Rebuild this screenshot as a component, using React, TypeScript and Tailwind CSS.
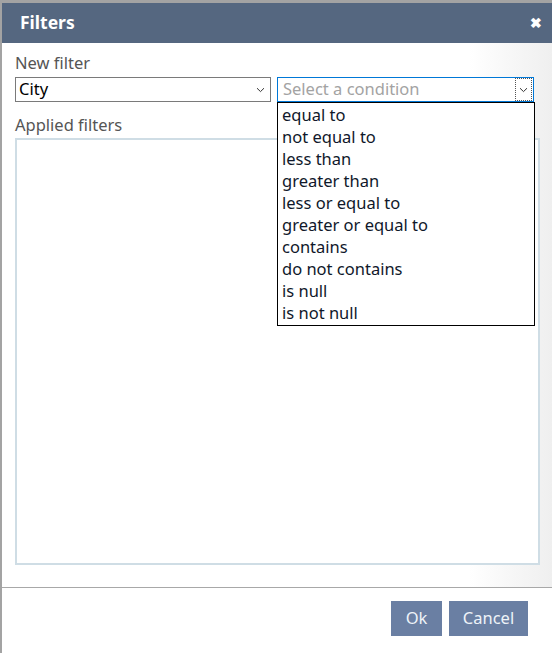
import React from "react";

const options = [
  "equal to",
  "not equal to",
  "less than",
  "greater than",
  "less or equal to",
  "greater or equal to",
  "contains",
  "do not contains",
  "is null",
  "is not null",
];

function Chevron() {
  return (
    <svg width="9" height="6" viewBox="0 0 9 6" fill="none">
      <path d="M1 1.2 L4.5 4.6 L8 1.2" stroke="#333" strokeWidth="1" />
    </svg>
  );
}

export default function App() {
  return (
    <div
      className="w-[552px] h-[653px] bg-[#a3a3a3] pt-[3px] pl-[2px] overflow-hidden"
      style={{ fontFamily: '"Noto Sans", "Open Sans", Arial, sans-serif' }}
    >
      <div className="relative flex flex-col w-[550px] h-[650px] bg-white">
        {/* header */}
        <div className="h-[40px] bg-[#556780] flex items-center justify-between pl-[18px] pr-[10px] shrink-0">
          <span className="text-white font-bold text-[17.5px] leading-none">Filters</span>
          <span className="text-white font-bold text-[14px] leading-none">✖</span>
        </div>
        {/* body */}
        <div className="flex-1 flex flex-col px-[13px] pt-[10px] bg-gradient-to-r from-white via-white via-85% to-[#efefef] border-b border-[#a8a8a8]">
          <div className="text-[16.5px] leading-[20px] text-[#555]">New filter</div>
          <div className="flex gap-[6px] mt-[4px]">
            <div className="w-[256px] h-[25px] border border-[#7a7a7a] bg-white flex items-center justify-between pl-[3px] pr-[5px]">
              <span className="text-[16.5px] text-black leading-none">City</span>
              <Chevron />
            </div>
            <div className="relative w-[257px] h-[25px] border border-[#0078d7] bg-white flex items-center justify-between pl-[5px]">
              <span className="text-[16.5px] text-[#a3a3a3] leading-none">Select a condition</span>
              <div className="w-[17px] h-[23px] border border-dotted border-[#555] flex items-center justify-center mr-px">
                <Chevron />
              </div>
              <div className="absolute left-[-1px] top-[24px] w-[258px] border border-black bg-white z-10 py-px">
                {options.map((o) => (
                  <div key={o} className="h-[22px] leading-[22px] pl-[4px] text-[16.5px] text-[#10182a]">
                    {o}
                  </div>
                ))}
              </div>
            </div>
          </div>
          <div className="text-[16.5px] leading-[20px] text-[#555] mt-[13px]">Applied filters</div>
          <div className="mt-[3px] w-[525px] h-[427px] border-2 border-[#cfdde5] bg-white" />
        </div>
        {/* footer */}
        <div className="h-[65px] flex items-start justify-end gap-[7px] pr-[24px] pt-[13px] shrink-0">
          <button className="h-[35px] w-[51px] bg-[#6a7fa3] text-[#eef3f8] text-[16.5px]">Ok</button>
          <button className="h-[35px] w-[79px] bg-[#6a7fa3] text-[#eef3f8] text-[16.5px]">Cancel</button>
        </div>
      </div>
    </div>
  );
}
